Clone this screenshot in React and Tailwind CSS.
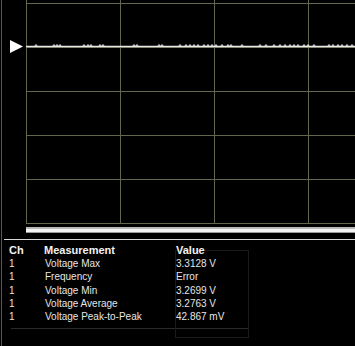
const rows = [
  { ch: "1", name: "Voltage Max", value: "3.3128 V" },
  { ch: "1", name: "Frequency", value: "Error" },
  { ch: "1", name: "Voltage Min", value: "3.2699 V" },
  { ch: "1", name: "Voltage Average", value: "3.2763 V" },
  { ch: "1", name: "Voltage Peak-to-Peak", value: "42.867 mV" },
];

// little glitches along the trace
const glitches = [
  34, 52, 55, 58, 82, 86, 89, 98, 101, 132, 135, 157, 160, 178, 184, 188,
  192, 196, 202, 206, 210, 214, 220, 226, 229, 240, 258, 264, 272, 278, 283,
  288, 292, 296, 302, 306, 312, 327, 331, 336, 340, 345, 350,
];

const Scope = () => {
  const vx = [24, 118, 212, 306];
  const hy = [3, 47, 91, 135, 179, 223];
  const trace = glitches
    .map((x) => `M${x - 1.5} 46.5 L${x} 44.5 L${x + 1.5} 46.5`)
    .join(" ");

  return (
    <svg width="353" height="236" className="block">
      {vx.map((x) => (
        <line key={x} x1={x + 0.5} y1="0" x2={x + 0.5} y2="224" stroke="#62664a" />
      ))}
      {hy.map((y) => (
        <line key={y} x1="24" y1={y + 0.5} x2="353" y2={y + 0.5} stroke="#62664a" />
      ))}
      <line x1="24" y1="46.5" x2="353" y2="46.5" stroke="#e8e8e8" strokeWidth="1.4" />
      <path d={trace} stroke="#f0f0f0" strokeWidth="1" fill="none" />
      <polygon points="8,40 8,53 21,46.5" fill="#ffffff" />
      <rect x="24" y="227" width="329" height="2" fill="#b8b8b8" />
      <rect x="24" y="229" width="329" height="3" fill="#f4f4f4" />
      <rect x="24" y="232" width="329" height="1" fill="#9a9a9a" />
    </svg>
  );
};

const App = () => {
  return (
    <div
      className="w-[355px] h-[346px] bg-black overflow-hidden flex text-[#e6e6e6] text-[10px] leading-[13.2px]"
      style={{ fontFamily: '"Liberation Sans", Arial, sans-serif' }}
    >
      <div className="w-px ml-px bg-[#4b5b6e]" />
      <div className="flex-1 flex flex-col">
        <Scope />
        <div className="h-[3px]" />
        <div className="h-px bg-[#d8d8d8] ml-[2px]" />

        {/* Measurements */}
        <div className="relative pt-[4px]">
          <div className="absolute left-[173px] top-[10px] w-[74px] h-[88px] border border-[#1a1a1a]" />
          <div className="relative flex font-bold text-[#f2f2f2] text-[11px]">
            <span className="w-[42px] pl-[7px]">Ch</span>
            <span className="w-[131px]">Measurement</span>
            <span className="pl-[1px]">Value</span>
          </div>
          {rows.map((r, i) => (
            <div key={i} className="relative flex">
              <span className="w-[42px] pl-[7px]">{r.ch}</span>
              <span className="w-[131px] pl-[1px]">{r.name}</span>
              <span className="pl-[1px]">{r.value}</span>
            </div>
          ))}
          <div className="ml-[9px] mt-[5px] w-[238px] h-px bg-[#2a2a2a]" />
        </div>
      </div>
    </div>
  );
};

export default App;
